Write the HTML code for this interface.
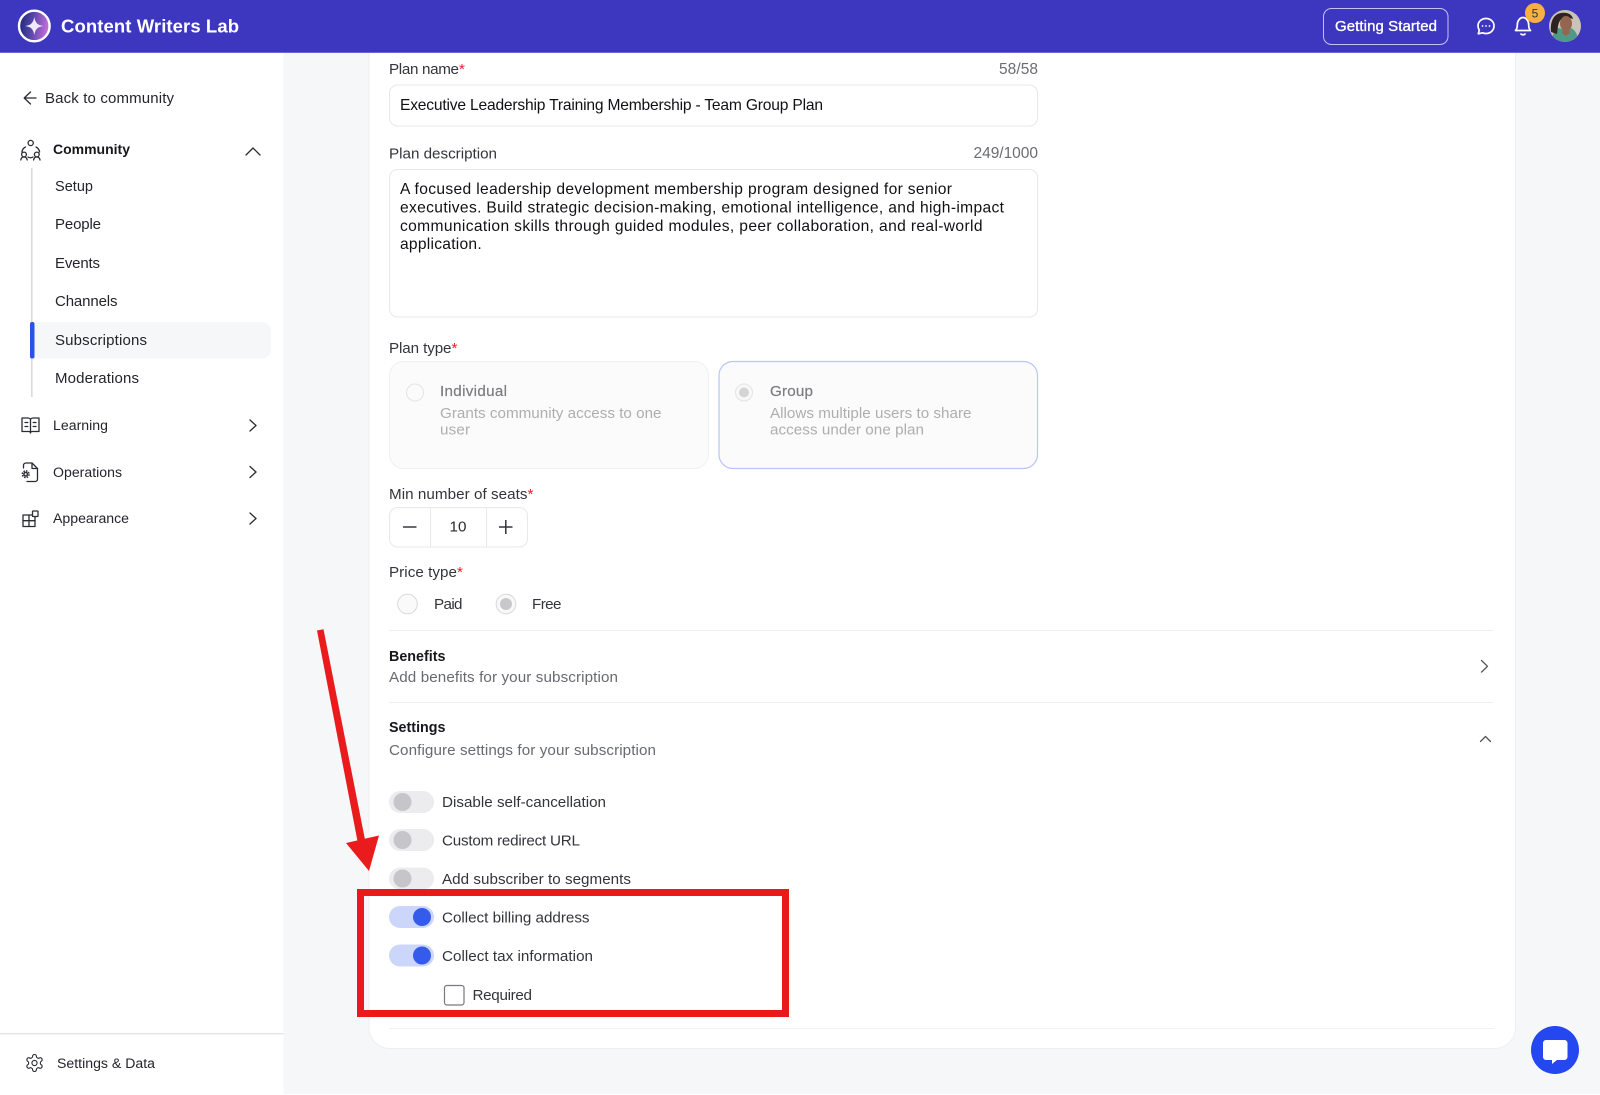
<!DOCTYPE html>
<html lang="en"><head><meta charset="utf-8"><title>Content Writers Lab</title>
<style>
html,body{margin:0;padding:0;width:1600px;height:1095px;overflow:hidden;background:#f6f7f9}
svg{display:block}
text{font-family:"Liberation Sans",Arial,sans-serif;font-size:15.2px;fill:#26282e;white-space:pre}
.sb{font-size:15px;fill:#23252b}
.sm{font-size:14.1px;fill:#23252b}
.lab{fill:#33353b}
.cnt{fill:#6a6c72;font-size:15.5px}
.body{font-size:15.6px;fill:#101114}
.dim{fill:#aeaeb0}
.dt{fill:#7b7c80;stroke:#7b7c80;stroke-width:.2}
.sub{fill:#676a70}
.b{font-weight:bold;fill:#17181c;font-size:14.3px}
.req{fill:#ee1c25}
.ic{fill:none;stroke:#2a2c33;stroke-width:1.3;stroke-linecap:round;stroke-linejoin:round}
.w{fill:none;stroke:#fff;stroke-width:1.7;stroke-linecap:round;stroke-linejoin:round}
</style></head>
<body>
<svg width="1600" height="1095" viewBox="0 0 1600 1095" xmlns="http://www.w3.org/2000/svg">
<defs>
<linearGradient id="lg" x1="0" y1="0" x2="1" y2="0.15"><stop offset="0" stop-color="#15266f"/><stop offset=".5" stop-color="#5a47ad"/><stop offset="1" stop-color="#c56dd8"/></linearGradient>
<clipPath id="av"><circle cx="1565" cy="26" r="16"/></clipPath>
</defs>
<rect width="1600" height="1095" fill="#f6f7f9"/>
<rect y="1094" width="1600" height="1" fill="#fff"/>

<!-- sidebar -->
<rect x="0" y="53" width="283.500" height="1042" fill="#fff"/>
<rect x="0" y="1033" width="283.500" height="1.300" fill="#e3e4e6"/>
<path class="ic" d="M36 98H24.500M30.500 92L24.200 98l6.300 6"/>
<text class="sb" x="45" y="103" textLength="129">Back to community</text>
<g class="ic" stroke-width="1.100">
<circle cx="30.700" cy="143" r="2.600"/><circle cx="24" cy="154.500" r="2.400"/><circle cx="36.800" cy="154.500" r="2.400"/>
<path d="M20.800 160c.3-2 1.500-3 3.200-3s2.900 1 3.200 3M33.600 160c.3-2 1.500-3 3.200-3s2.900 1 3.200 3M25.500 147c-2 1-3.300 2.800-3.600 5M36 147c2 1 3.300 2.800 3.600 5M28 157c1.700 1 3.300 1 5 0"/>
</g>
<text class="b" x="53" y="154" textLength="77" style="font-size:14px">Community</text>
<path class="ic" d="M246 155l7-7 7 7" stroke-width="1.500"/>
<rect x="31" y="168" width="1.600" height="229" fill="#dcd9d9"/>
<rect x="32" y="322" width="239" height="36.500" rx="9" fill="#f6f7f9"/>
<rect x="30" y="322" width="4.500" height="36.500" rx="2" fill="#2a52e6"/>
<text class="sb" x="55" y="191" textLength="38" style="font-size:14.5px">Setup</text>
<text class="sb" x="55" y="229" textLength="46">People</text>
<text class="sb" x="55" y="268" textLength="45">Events</text>
<text class="sb" x="55" y="306" textLength="62.500">Channels</text>
<text class="sb" x="55" y="345" textLength="92">Subscriptions</text>
<text class="sb" x="55" y="383" textLength="84">Moderations</text>
<g class="ic" stroke-width="1.300">
<path d="M22 418h6c1.500 0 2.500 1 2.500 2 0-1 1-2 2.500-2h6v13.500h-7c-1 0-1.500.5-1.500 1.500 0-1-.5-1.500-1.500-1.500h-7zM30.500 420v13"/>
<path d="M25 422.500h2.800M25 426.500h2.800M33.200 422.500H36M33.200 426.500H36"/>
</g>
<text class="sm" x="53" y="430" textLength="55">Learning</text>
<path class="ic" d="M250 420l6 5.500-6 5.500" stroke-width="1.700"/>
<g class="ic" stroke-width="1.300">
<path d="M23.500 468v-2.500c0-1.500 1-2.500 2.500-2.500h6l5.500 5.500v10.500c0 1.500-1 2.500-2.500 2.500h-8"/>
<path d="M32 463v5.500h5.500"/>
<circle cx="25.700" cy="474.200" r="1.800" stroke-width="1.500"/>
<circle cx="25.700" cy="474.200" r="3.400" stroke-dasharray="1.600 1.100" stroke-linecap="butt" stroke-width="1.400"/>
</g>
<text class="sm" x="53" y="477" textLength="69">Operations</text>
<path class="ic" d="M250 466.500l6 5.500-6 5.500" stroke-width="1.700"/>
<g class="ic" stroke-width="1.300">
<rect x="23" y="515" width="12" height="11.500"/>
<path d="M23 520.700h12M29 515v11.500"/>
<rect x="32.500" y="511" width="5.500" height="5.500" rx=".6" fill="#fff"/>
</g>
<text class="sm" x="53" y="523" textLength="76">Appearance</text>
<path class="ic" d="M250 513l6 5.500-6 5.500" stroke-width="1.700"/>
<g class="ic" stroke-width="1.600" transform="translate(24.300 1052.800) scale(.85)">
<path d="M12.220 2h-.44a2 2 0 0 0-2 2v.18a2 2 0 0 1-1 1.730l-.43.250a2 2 0 0 1-2 0l-.15-.08a2 2 0 0 0-2.730.730l-.22.380a2 2 0 0 0 .73 2.730l.15.100a2 2 0 0 1 1 1.720v.510a2 2 0 0 1-1 1.740l-.15.090a2 2 0 0 0-.73 2.730l.22.380a2 2 0 0 0 2.730.730l.15-.08a2 2 0 0 1 2 0l.43.250a2 2 0 0 1 1 1.730V20a2 2 0 0 0 2 2h.44a2 2 0 0 0 2-2v-.18a2 2 0 0 1 1-1.730l.43-.250a2 2 0 0 1 2 0l.15.08a2 2 0 0 0 2.730-.730l.22-.390a2 2 0 0 0-.73-2.730l-.15-.08a2 2 0 0 1-1-1.740v-.5a2 2 0 0 1 1-1.740l.15-.09a2 2 0 0 0 .73-2.730l-.22-.38a2 2 0 0 0-2.730-.730l-.15.08a2 2 0 0 1-2 0l-.43-.25a2 2 0 0 1-1-1.730V4a2 2 0 0 0-2-2z"/>
<circle cx="12" cy="12" r="3"/>
</g>
<text class="sm" x="57" y="1068" textLength="98">Settings &amp; Data</text>

<!-- card -->
<path d="M369 40V1027a21 21 0 0 0 21 21.500H1494a21 21 0 0 0 21.500-21.500V40z" fill="#fff" stroke="#eeeff1" stroke-width="1"/>

<!-- header -->
<rect width="1600" height="52" fill="#3d37bf"/>
<rect y="52" width="1600" height="1" fill="#6a65d1"/>
<circle cx="34.300" cy="26" r="15.300" fill="url(#lg)" stroke="#fff" stroke-width="2.400"/>
<path d="M34.300 17c1 5.600 2.900 8 9 9-6.100 1-8 3.400-9 9-1-5.600-2.900-8-9-9 6.100-1 8-3.400 9-9z" fill="#efe9fb"/>
<text x="61" y="32.500" textLength="178" style="font-size:18.500px;font-weight:bold;fill:#fff">Content Writers Lab</text>
<rect x="1323.500" y="8.500" width="124.500" height="36" rx="8" fill="none" stroke="#c5c3ee" stroke-width="1"/>
<text x="1335" y="31" textLength="102" style="font-size:15px;fill:#fff;stroke:#fff;stroke-width:.35">Getting Started</text>
<path class="w" d="M1486 18.500c-4.800 0-8 3.400-8 7.400 0 1.500.5 3 1.300 4.100l-1 3.800 4.300-1c1.100.5 2.200.7 3.400.7 4.800 0 8-3.400 8-7.600 0-4-3.200-7.400-8-7.400z" stroke-width="1.500"/>
<circle cx="1482.500" cy="26" r=".9" fill="#fff"/><circle cx="1486" cy="26" r=".9" fill="#fff"/><circle cx="1489.500" cy="26" r=".9" fill="#fff"/>
<path class="w" d="M1515.500 30.500c1.500-1.500 1.800-3 1.800-5.500 0-4 2.500-7.500 5.700-7.500s5.700 3.500 5.700 7.500c0 2.500.3 4 1.800 5.500zM1521 34c.5 1 3.500 1 4 0" stroke-width="1.500"/>
<circle cx="1535" cy="13" r="10" fill="#f8b141"/>
<text x="1535" y="17.500" text-anchor="middle" style="font-size:12px;fill:#333">5</text>
<g clip-path="url(#av)">
<rect x="1549" y="10" width="32" height="32" fill="#c9c3b8"/>
<path d="M1552 42c0-8 3-13 7-14l6 2 6-2c4 2 7 6 7 14z" fill="#4f9a86"/>
<path d="M1551 32c-1-11 3-18 10-19 6-1 11 1 12 6-3-1-6-2-9-1-4 1-5 4-6 8l-1 8z" fill="#2d2421"/>
<ellipse cx="1566" cy="23.500" rx="6" ry="7.500" fill="#96654f"/>
<path d="M1563 29h6l1 4-4 3-4-3z" fill="#96654f"/>
</g>

<!-- form fields -->
<text class="lab" x="389" y="74" textLength="70">Plan name</text>
<text class="req" x="459" y="74">*</text>
<text class="cnt" x="999" y="74" textLength="39">58/58</text>
<rect x="389.500" y="85" width="648" height="41" rx="8" fill="#fff" stroke="#e8e8ea"/>
<text class="body" x="400" y="110" textLength="423">Executive Leadership Training Membership - Team Group Plan</text>
<text class="lab" x="389" y="158.500" textLength="108">Plan description</text>
<text class="cnt" x="973.500" y="158" textLength="64.500">249/1000</text>
<rect x="389.500" y="169.500" width="648" height="147.500" rx="8" fill="#fff" stroke="#e8e8ea"/>
<text class="body" x="400" y="194" textLength="552">A focused leadership development membership program designed for senior</text>
<text class="body" x="400" y="212.500" textLength="604">executives. Build strategic decision-making, emotional intelligence, and high-impact</text>
<text class="body" x="400" y="231" textLength="582.500">communication skills through guided modules, peer collaboration, and real-world</text>
<text class="body" x="400" y="249" textLength="81.700">application.</text>

<text class="lab" x="389" y="353" textLength="62.500">Plan type</text>
<text class="req" x="451.500" y="353">*</text>
<rect x="389.500" y="361.500" width="319" height="107" rx="14" fill="#fbfbfb" stroke="#f0f0f1"/>
<rect x="719" y="361.500" width="318.500" height="107" rx="14" fill="#fbfbfb" stroke="#b9c5f6" stroke-width="1.200"/>
<circle cx="415" cy="392.500" r="8.500" fill="#fbfbfb" stroke="#e4e4e5"/>
<circle cx="744" cy="392.500" r="8.500" fill="#f8f8f8" stroke="#e4e4e5"/>
<circle cx="744" cy="392.500" r="5" fill="#d4d4d6"/>
<text class="dt" x="440" y="396" textLength="67">Individual</text>
<text class="dt" x="770" y="396" textLength="43">Group</text>
<text class="dim" x="440" y="418" textLength="221.500">Grants community access to one</text>
<text class="dim" x="440" y="434.500" textLength="30">user</text>
<text class="dim" x="770" y="418" textLength="201.500">Allows multiple users to share</text>
<text class="dim" x="770" y="434.500" textLength="154">access under one plan</text>

<text class="lab" x="389" y="499" textLength="138.500">Min number of seats</text>
<text class="req" x="527.500" y="499">*</text>
<rect x="389.500" y="507.500" width="138" height="39.500" rx="8" fill="#fff" stroke="#e8e8ea"/>
<path d="M430.500 508V547M486.500 508V547" stroke="#e8e8ea"/>
<path d="M403 527h13.500" stroke="#44464c" stroke-width="1.600"/>
<path d="M499 527h13.500M505.800 520v14" stroke="#33353b" stroke-width="1.500"/>
<text x="458" y="531.500" text-anchor="middle" style="font-size:15.200px;fill:#26282e">10</text>

<text class="lab" x="389" y="577" textLength="68">Price type</text>
<text class="req" x="457" y="577">*</text>
<circle cx="407.500" cy="604" r="9.800" fill="#fafafa" stroke="#d8d8da"/>
<text class="lab" x="434" y="609" textLength="28.500">Paid</text>
<circle cx="506" cy="604" r="9.800" fill="#f8f8f8" stroke="#d8d8da"/>
<circle cx="506" cy="604" r="6" fill="#c8c8cb"/>
<text class="lab" x="532" y="609" textLength="29.500">Free</text>

<rect x="389" y="630" width="1105" height="1" fill="#eeeff0"/>
<text class="b" x="389" y="661" textLength="56.500">Benefits</text>
<text class="sub" x="389" y="682" textLength="229">Add benefits for your subscription</text>
<path class="ic" d="M1481.500 660.500l6 5.800-6 5.800" stroke-width="1.400" style="stroke:#555"/>
<rect x="389" y="702" width="1105" height="1" fill="#eeeff0"/>
<text class="b" x="389" y="732" textLength="56.500">Settings</text>
<text class="sub" x="389" y="755" textLength="267">Configure settings for your subscription</text>
<path class="ic" d="M1480.500 741.500l5-5 5 5" stroke-width="1.300" style="stroke:#555"/>

<!-- toggles -->
<rect x="389" y="791" width="45" height="22" rx="11" fill="#ececee"/><circle cx="402.500" cy="802" r="9" fill="#c6c6ca"/>
<text class="lab" x="442" y="807" textLength="164">Disable self-cancellation</text>
<rect x="389" y="829" width="45" height="22" rx="11" fill="#ececee"/><circle cx="402.500" cy="840" r="9" fill="#c6c6ca"/>
<text class="lab" x="442" y="845.500" textLength="138">Custom redirect URL</text>
<rect x="389" y="867.500" width="45" height="22" rx="11" fill="#ececee"/><circle cx="402.500" cy="878.500" r="9" fill="#c6c6ca"/>
<text class="lab" x="442" y="884" textLength="189">Add subscriber to segments</text>
<rect x="389" y="906" width="45" height="22" rx="11" fill="#ccd6fb"/><circle cx="422" cy="917" r="9" fill="#345bea"/>
<text class="lab" x="442" y="922.500" textLength="147.500">Collect billing address</text>
<rect x="389" y="944.500" width="45" height="22" rx="11" fill="#ccd6fb"/><circle cx="422" cy="955.500" r="9" fill="#345bea"/>
<text class="lab" x="442" y="961" textLength="151">Collect tax information</text>
<rect x="444.500" y="985.500" width="19.500" height="19.500" rx="2.500" fill="#fff" stroke="#77797e" stroke-width="1.200"/>
<text class="lab" x="472.500" y="1000" textLength="59.500">Required</text>
<rect x="389" y="1028" width="1105" height="1" fill="#f0f1f2"/>

<!-- chat bubble -->
<circle cx="1555" cy="1050" r="24" fill="#2447ef"/>
<path d="M1546 1040h18.500a3 3 0 0 1 3 3v14a3 3 0 0 1-3 3h-7.500l-5 4v-4h-6a3 3 0 0 1-3-3v-14a3 3 0 0 1 3-3z" fill="#fff"/>

<!-- annotations -->
<rect x="360.500" y="892.500" width="425" height="121" fill="none" stroke="#ea191c" stroke-width="7"/>
<path d="M317 630.500l6.500-1.300 42 213-7.500 1.500z" fill="#e91b1c"/>
<path d="M346 843l33-7.500-10 35.500z" fill="#e91b1c"/>
</svg>
</body></html>
